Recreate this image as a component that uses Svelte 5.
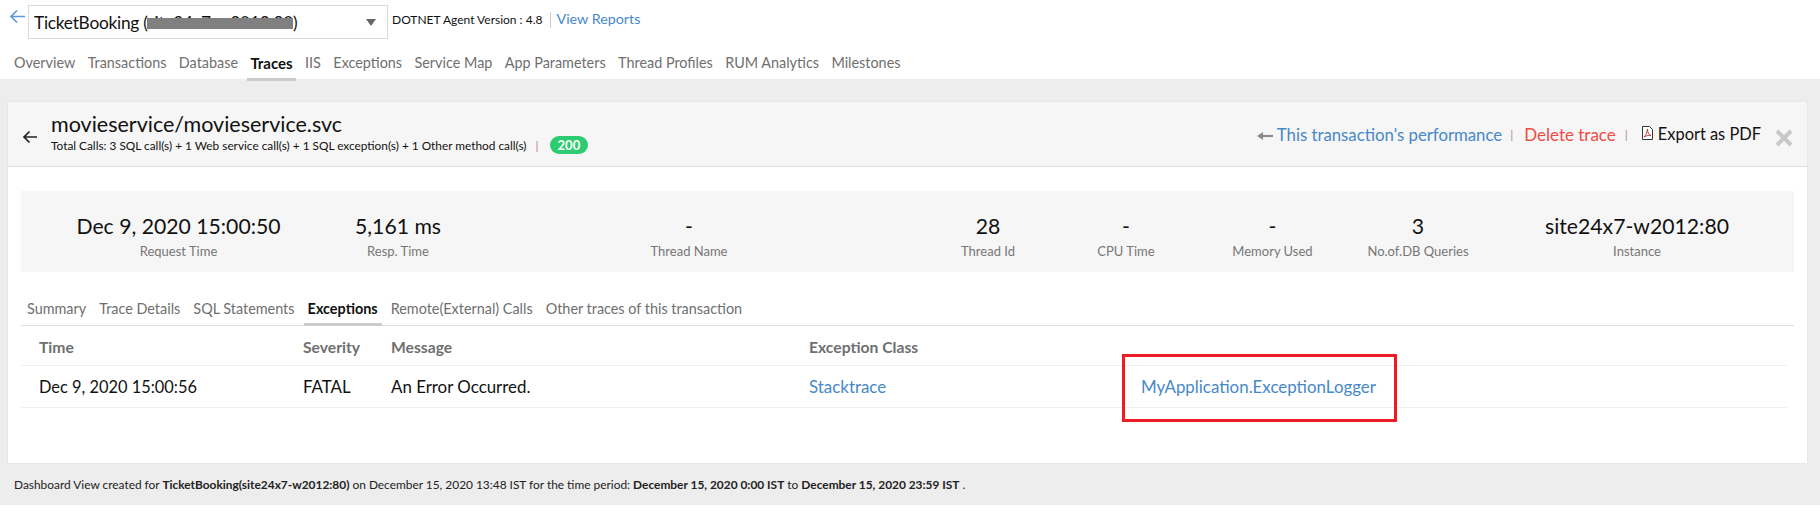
<script>
  const mainTabs = ["Overview", "Transactions", "Database", "Traces", "IIS", "Exceptions", "Service Map", "App Parameters", "Thread Profiles", "RUM Analytics", "Milestones"];
  const subTabs = ["Summary", "Trace Details", "SQL Statements", "Exceptions", "Remote(External) Calls", "Other traces of this transaction"];
  const stats = [
    ["Dec 9, 2020 15:00:50", "Request Time", 315],
    ["5,161 ms", "Resp. Time", 124],
    ["-", "Thread Name", 458],
    ["28", "Thread Id", 140],
    ["-", "CPU Time", 136],
    ["-", "Memory Used", 157],
    ["3", "No.of.DB Queries", 134],
    ["site24x7-w2012:80", "Instance", 304]
  ];
</script>

<div class="top">
  <div class="selector">
    <svg class="back" width="17" height="15" viewBox="0 0 17 15"><path d="M16 7.500H2M8 1.500l-6 6 6 6" fill="none" stroke="#5a9bdc" stroke-width="1.700" /></svg>
    <div class="dropdown">
      <span>TicketBooking (<span class="smudge">site24x7-w2012:80</span>)</span>
      <i class="caret"></i>
    </div>
    <span class="agent">DOTNET Agent Version : 4.8</span>
    <a class="reports" href="#top">View Reports</a>
  </div>
  <nav class="tabs">
    {#each mainTabs as tab}
      <span class="tab" class:active={tab === "Traces"}>{tab}</span>
    {/each}
  </nav>
</div>

<main class="page">
  <section class="panel">
    <header class="head">
      <svg class="title-back" width="16" height="14" viewBox="0 0 16 14"><path d="M15 7H2M7.500 1.500 2 7l5.500 5.500" fill="none" stroke="#222" stroke-width="1.700" /></svg>
      <div class="title">
        <h1>movieservice/movieservice.svc</h1>
        <p>Total Calls: 3 SQL call(s) + 1 Web service call(s) + 1 SQL exception(s) + 1 Other method call(s) <em>|</em> <b>200</b></p>
      </div>
      <div class="actions">
        <a class="perf" href="#top">
          <svg width="16" height="10" viewBox="0 0 16 10"><path d="M16 5H4" stroke="#8a8a8a" stroke-width="2.200" /><path d="M6 1 0 5l6 4z" fill="#8a8a8a" /></svg>
          This transaction's performance
        </a>
        <em>|</em>
        <a class="del" href="#top">Delete trace</a>
        <em>|</em>
        <span class="pdf">
          <svg width="11" height="14" viewBox="0 0 11 14"><path d="M.5.500h7l3 3v10H.500z" fill="#fff" stroke="#333" /><path d="M5.500 3c-.5 3-1.500 6-3.500 8 3-1.500 5-2 7-1.500-2.500-1-3.500-3.500-3.500-6.500z" fill="none" stroke="#a33" stroke-width=".9" /></svg>
          Export as PDF
        </span>
        <svg class="close" width="18" height="18" viewBox="0 0 18 18"><path d="M2 2l14 14M16 2 2 16" stroke="#c8c8c8" stroke-width="4" /></svg>
      </div>
    </header>

    <div class="stats">
      {#each stats as s}
        <div class="stat" style="width:{s[2]}px">
          <strong>{s[0]}</strong>
          <small>{s[1]}</small>
        </div>
      {/each}
    </div>

    <nav class="subtabs">
      {#each subTabs as tab}
        <span class="subtab" class:active={tab === "Exceptions"}>{tab}</span>
      {/each}
    </nav>

    <div class="table">
      <div class="row header">
        <span>Time</span><span>Severity</span><span>Message</span><span>Exception Class</span><span></span>
      </div>
      <div class="row">
        <span class="date">Dec 9, 2020 15:00:56</span><span>FATAL</span><span>An Error Occurred.</span>
        <a href="#top">Stacktrace</a>
        <a class="logger" href="#top">MyApplication.ExceptionLogger</a>
      </div>
    </div>
  </section>

  <footer class="foot">
    Dashboard View created for <b>TicketBooking(site24x7-w2012:80)</b> on December 15, 2020 13:48 IST for the time period: <b>December 15, 2020 0:00 IST</b> to <b>December 15, 2020 23:59 IST</b> .
  </footer>
</main>

<style>
  :global(body) {
    margin: 0;
    background: #fff;
    font-family: Lato, "Open Sans", sans-serif;
    color: #111;
  }
  a {
    color: #4788c8;
    text-decoration: none;
  }
  em {
    font-style: normal;
    color: #b08a7a;
    font-size: 12px;
  }

  .top {
    height: 79px;
  }
  .selector {
    display: flex;
    align-items: flex-start;
    height: 39px;
    padding: 5px 0 0 9px;
    box-sizing: border-box;
  }
  .back {
    margin: 4px 2px 0 0;
  }
  .dropdown {
    display: flex;
    align-items: center;
    justify-content: space-between;
    box-sizing: border-box;
    width: 360px;
    height: 34px;
    padding: 0 6px 0 5px;
    border: 1px solid #d8d8d8;
    font-size: 17.300px;
    letter-spacing: -0.25px;
  }
  .smudge {
    position: relative;
  }
  .smudge::after {
    content: "";
    position: absolute;
    left: 0;
    right: 0;
    top: 6px;
    height: 11px;
    background: #808080;
  }
  .caret {
    width: 0;
    height: 0;
    border: 5px solid transparent;
    border-top: 7px solid #666;
    border-bottom: 0;
    margin-right: 5px;
  }
  .agent {
    margin: 7px 0 0 4px;
    padding-right: 8px;
    border-right: 1px solid #ccc;
    font-size: 12px;
    line-height: 16px;
    height: 16px;
  }
  .reports {
    margin: 4px 0 0 5px;
    font-size: 14.300px;
    line-height: 20px;
  }
  .tabs {
    display: flex;
    gap: 12.400px;
    padding-left: 14px;
    height: 40px;
  }
  .tab {
    padding-top: 14px;
    font-size: 14.400px;
    line-height: 20px;
    color: #6f6f6f;
  }
  .tab.active {
    color: #111;
    font-weight: 700;
    border-bottom: 3px solid #ccc;
    box-sizing: border-box;
    height: 42px;
    margin: 0 -3px;
    padding-left: 3px;
    padding-right: 3px;
    font-size: 15px;
  }

  .page {
    background: #ededed;
    height: 426px;
    padding: 23px 13px 0 8px;
    box-sizing: border-box;
  }
  .panel {
    position: relative;
    background: #fff;
    height: 361px;
    box-sizing: border-box;
    box-shadow: 0 0 2px #d8d8d8;
  }
  .head {
    display: flex;
    align-items: flex-start;
    height: 65px;
    box-sizing: border-box;
    background: #f6f6f6;
    border-bottom: 1px solid #dedede;
  }
  .title-back {
    margin: 28px 13px 0 14px;
  }
  .title h1 {
    margin: 9px 0 0;
    font-size: 21.500px;
    line-height: 26px;
    font-weight: 400;
  }
  .title p {
    margin: -1px 0 0;
    font-size: 11.830px;
    line-height: 19px;
  }
  .title em {
    margin-left: 6px;
  }
  .title b {
    display: inline-block;
    margin-left: 8px;
    padding: 0 8px;
    border-radius: 9px;
    background: #2ecc71;
    color: #fff;
    line-height: 18px;
    font-size: 13px;
  }
  .actions {
    display: flex;
    align-items: center;
    margin: 20px 14px 0 auto;
    font-size: 17px;
  }
  .perf {
    font-size: 16.750px;
  }
  .del {
    color: #f04a45;
    margin: 0 9px;
  }
  .actions > em:first-of-type {
    margin-left: 8px;
    margin-right: 2px;
  }
  .pdf {
    display: flex;
    align-items: center;
    gap: 5px;
    color: #111;
    font-size: 16.400px;
    margin: -3px 14px 0 14px;
  }
  .close {
    margin-top: 7px;
  }

  .stats {
    display: flex;
    height: 81px;
    margin: 24px 13px 0;
    background: #f6f6f6;
  }
  .stat {
    flex: none;
    padding-top: 23px;
    box-sizing: border-box;
    text-align: center;
  }
  .stat strong {
    display: block;
    font-size: 21.200px;
    line-height: 24px;
    font-weight: 400;
  }
  .stat small {
    display: block;
    margin-top: 5px;
    font-size: 13px;
    line-height: 16px;
    color: #777;
  }

  .subtabs {
    display: flex;
    gap: 13.100px;
    height: 54px;
    margin: 0 13px;
    padding-left: 6px;
    box-sizing: border-box;
    border-bottom: 1px solid #dedede;
  }
  .subtab {
    padding-top: 27px;
    font-size: 14.400px;
    line-height: 20px;
    color: #6f6f6f;
  }
  .subtab.active {
    color: #111;
    font-weight: 700;
    box-sizing: border-box;
    height: 54px;
    margin: 0 -4px;
    padding-left: 4px;
    padding-right: 4px;
    border-bottom: 3px solid #ccc;
  }

  .table {
    margin: 0 20px 0 13px;
  }
  .row {
    display: grid;
    grid-template-columns: 264px 88px 418px 332px 1fr;
    height: 41px;
    align-items: center;
    padding-left: 18px;
    border-bottom: 1px solid #f0f0f0;
    font-size: 16.900px;
  }
  .date {
    font-size: 16.400px;
  }
  .row.header {
    height: 40px;
    padding-top: 2px;
    box-sizing: border-box;
    font-size: 15.700px;
    font-weight: 700;
    color: #6f6f6f;
  }
  .logger::after {
    content: "";
    position: absolute;
    left: 1114px;
    top: 252px;
    width: 269px;
    height: 62px;
    border: 3px solid #ed1c24;
  }

  .foot {
    padding: 13px 0 0 6px;
    font-size: 11.900px;
    line-height: 18px;
    color: #222;
  }
</style>
